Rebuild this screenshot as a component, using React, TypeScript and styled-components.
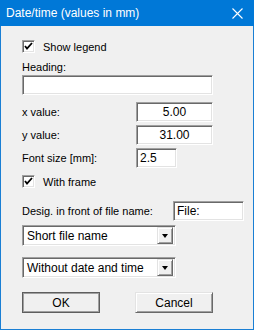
import styled, { createGlobalStyle } from 'styled-components';

const GlobalStyle = createGlobalStyle`
  html, body {
    margin: 0;
    padding: 0;
    background: #ffffff;
  }
  body {
    font-family: "Liberation Sans", Arial, sans-serif;
    font-size: 11px;
    color: #000;
  }
`;

const Window = styled.div`
  width: 254px;
  height: 330px;
  box-sizing: border-box;
  border: 1px solid #1a7fd4;
  border-top: none;
  background: #f0f0f0;
  display: flex;
  flex-direction: column;
`;

const TitleBar = styled.div`
  height: 26px;
  margin: 0 -1px;
  background: #0078d7;
  color: #fff;
  display: flex;
  align-items: center;
  justify-content: space-between;
  padding: 0 11px 0 6px;
  font-size: 12px;
  flex-shrink: 0;
`;

const Body = styled.div`
  flex: 1;
  padding: 14px 0 0 21px;
  display: flex;
  flex-direction: column;
`;

const CheckRow = styled.label<{ $mt?: number }>`
  display: flex;
  align-items: center;
  gap: 8px;
  height: 13px;
  margin-top: ${(p) => p.$mt ?? 0}px;
`;

const Box = styled.span`
  width: 13px;
  height: 13px;
  box-sizing: border-box;
  background: #fff;
  border: 1px solid;
  border-color: #a0a0a0 #fff #fff #a0a0a0;
  box-shadow: inset 1px 1px 0 #696969, inset -1px -1px 0 #e3e3e3;
  display: flex;
  align-items: center;
  justify-content: center;
`;

const Label = styled.div<{ $mt?: number }>`
  line-height: 13px;
  margin-top: ${(p) => p.$mt ?? 0}px;
`;

const Field = styled.div<{ $w: number; $align?: string; $mt?: number }>`
  width: ${(p) => p.$w}px;
  height: 20px;
  box-sizing: border-box;
  background: #fff;
  border: 1px solid;
  border-color: #a0a0a0 #fff #fff #a0a0a0;
  box-shadow: inset 1px 1px 0 #696969, inset -1px -1px 0 #e3e3e3;
  display: flex;
  align-items: center;
  justify-content: ${(p) => p.$align ?? 'flex-start'};
  padding: 0 3px;
  margin-top: ${(p) => p.$mt ?? 0}px;
  font-size: 12px;
`;

const Row = styled.div<{ $mt?: number; $w?: number }>`
  display: flex;
  align-items: center;
  justify-content: space-between;
  width: ${(p) => p.$w ?? 191}px;
  margin-top: ${(p) => p.$mt ?? 0}px;
`;

const Combo = styled.div<{ $mt?: number }>`
  width: 154px;
  height: 21px;
  box-sizing: border-box;
  background: #fff;
  border: 1px solid;
  border-color: #a0a0a0 #fff #fff #a0a0a0;
  box-shadow: inset 1px 1px 0 #696969, inset -1px -1px 0 #e3e3e3;
  margin-top: ${(p) => p.$mt ?? 0}px;
  display: flex;
  align-items: center;
  padding: 2px;
  font-size: 12px;
`;

const ComboText = styled.span`
  flex: 1;
  padding-left: 2px;
`;

const DropButton = styled.span`
  width: 16px;
  height: 17px;
  box-sizing: border-box;
  background: #f0f0f0;
  border: 1px solid;
  border-color: #e3e3e3 #696969 #696969 #e3e3e3;
  box-shadow: inset 1px 1px 0 #fff, inset -1px -1px 0 #a0a0a0;
  display: flex;
  align-items: center;
  justify-content: center;
`;

const Arrow = styled.span`
  width: 0;
  height: 0;
  border-left: 3.5px solid transparent;
  border-right: 3.5px solid transparent;
  border-top: 4px solid #000;
`;

const ButtonRow = styled.div`
  display: flex;
  gap: 35px;
  margin-top: 14px;
`;

const Button = styled.div<{ $default?: boolean }>`
  width: 78px;
  height: 21px;
  box-sizing: border-box;
  background: #f0f0f0;
  border: 1px solid;
  border-color: ${(p) => (p.$default ? '#5e5e5e' : '#e3e3e3 #696969 #696969 #e3e3e3')};
  box-shadow: ${(p) =>
    p.$default
      ? 'inset 1px 1px 0 #a0a0a0, inset -1px -1px 0 #a0a0a0'
      : 'inset 1px 1px 0 #fff, inset -1px -1px 0 #a0a0a0'};
  display: flex;
  align-items: center;
  justify-content: center;
  font-size: 12px;
`;

const Check = () => (
  <svg width="9" height="9" viewBox="0 0 9 9">
    <path d="M1 4 L3 6.5 L8 1" stroke="#000" strokeWidth="1.8" fill="none" />
  </svg>
);

const CheckBox = ({ label, mt }: { label: string; mt?: number }) => (
  <CheckRow $mt={mt}>
    <Box>
      <Check />
    </Box>
    <span>{label}</span>
  </CheckRow>
);

const Combobox = ({ value, mt }: { value: string; mt?: number }) => (
  <Combo $mt={mt}>
    <ComboText>{value}</ComboText>
    <DropButton>
      <Arrow />
    </DropButton>
  </Combo>
);

const App = () => (
  <>
    <GlobalStyle />
    <Window>
      <TitleBar>
        <span>Date/time (values in mm)</span>
        <svg width="11" height="11" viewBox="0 0 11 11">
          <path d="M0.5 0.5 L10.5 10.5 M10.5 0.5 L0.5 10.5" stroke="#fff" strokeWidth="1.1" />
        </svg>
      </TitleBar>
      <Body>
        <CheckBox label="Show legend" />
        <Label $mt={8}>Heading:</Label>
        <Field $w={191} $mt={1} />
        <Row $mt={7}>
          <span>x value:</span>
          <Field $w={77} $align="center">5.00</Field>
        </Row>
        <Row $mt={3}>
          <span>y value:</span>
          <Field $w={77} $align="center">31.00</Field>
        </Row>
        <Row $mt={3} $w={155}>
          <span>Font size [mm]:</span>
          <Field $w={41}>2.5</Field>
        </Row>
        <CheckBox label="With frame" mt={7} />
        <Row $mt={13} $w={222}>
          <span>Desig. in front of file name:</span>
          <Field $w={71}>File:</Field>
        </Row>
        <Combobox value="Short file name" mt={4} />
        <Combobox value="Without date and time" mt={11} />
        <ButtonRow>
          <Button $default>OK</Button>
          <Button>Cancel</Button>
        </ButtonRow>
      </Body>
    </Window>
  </>
);

export default App;
